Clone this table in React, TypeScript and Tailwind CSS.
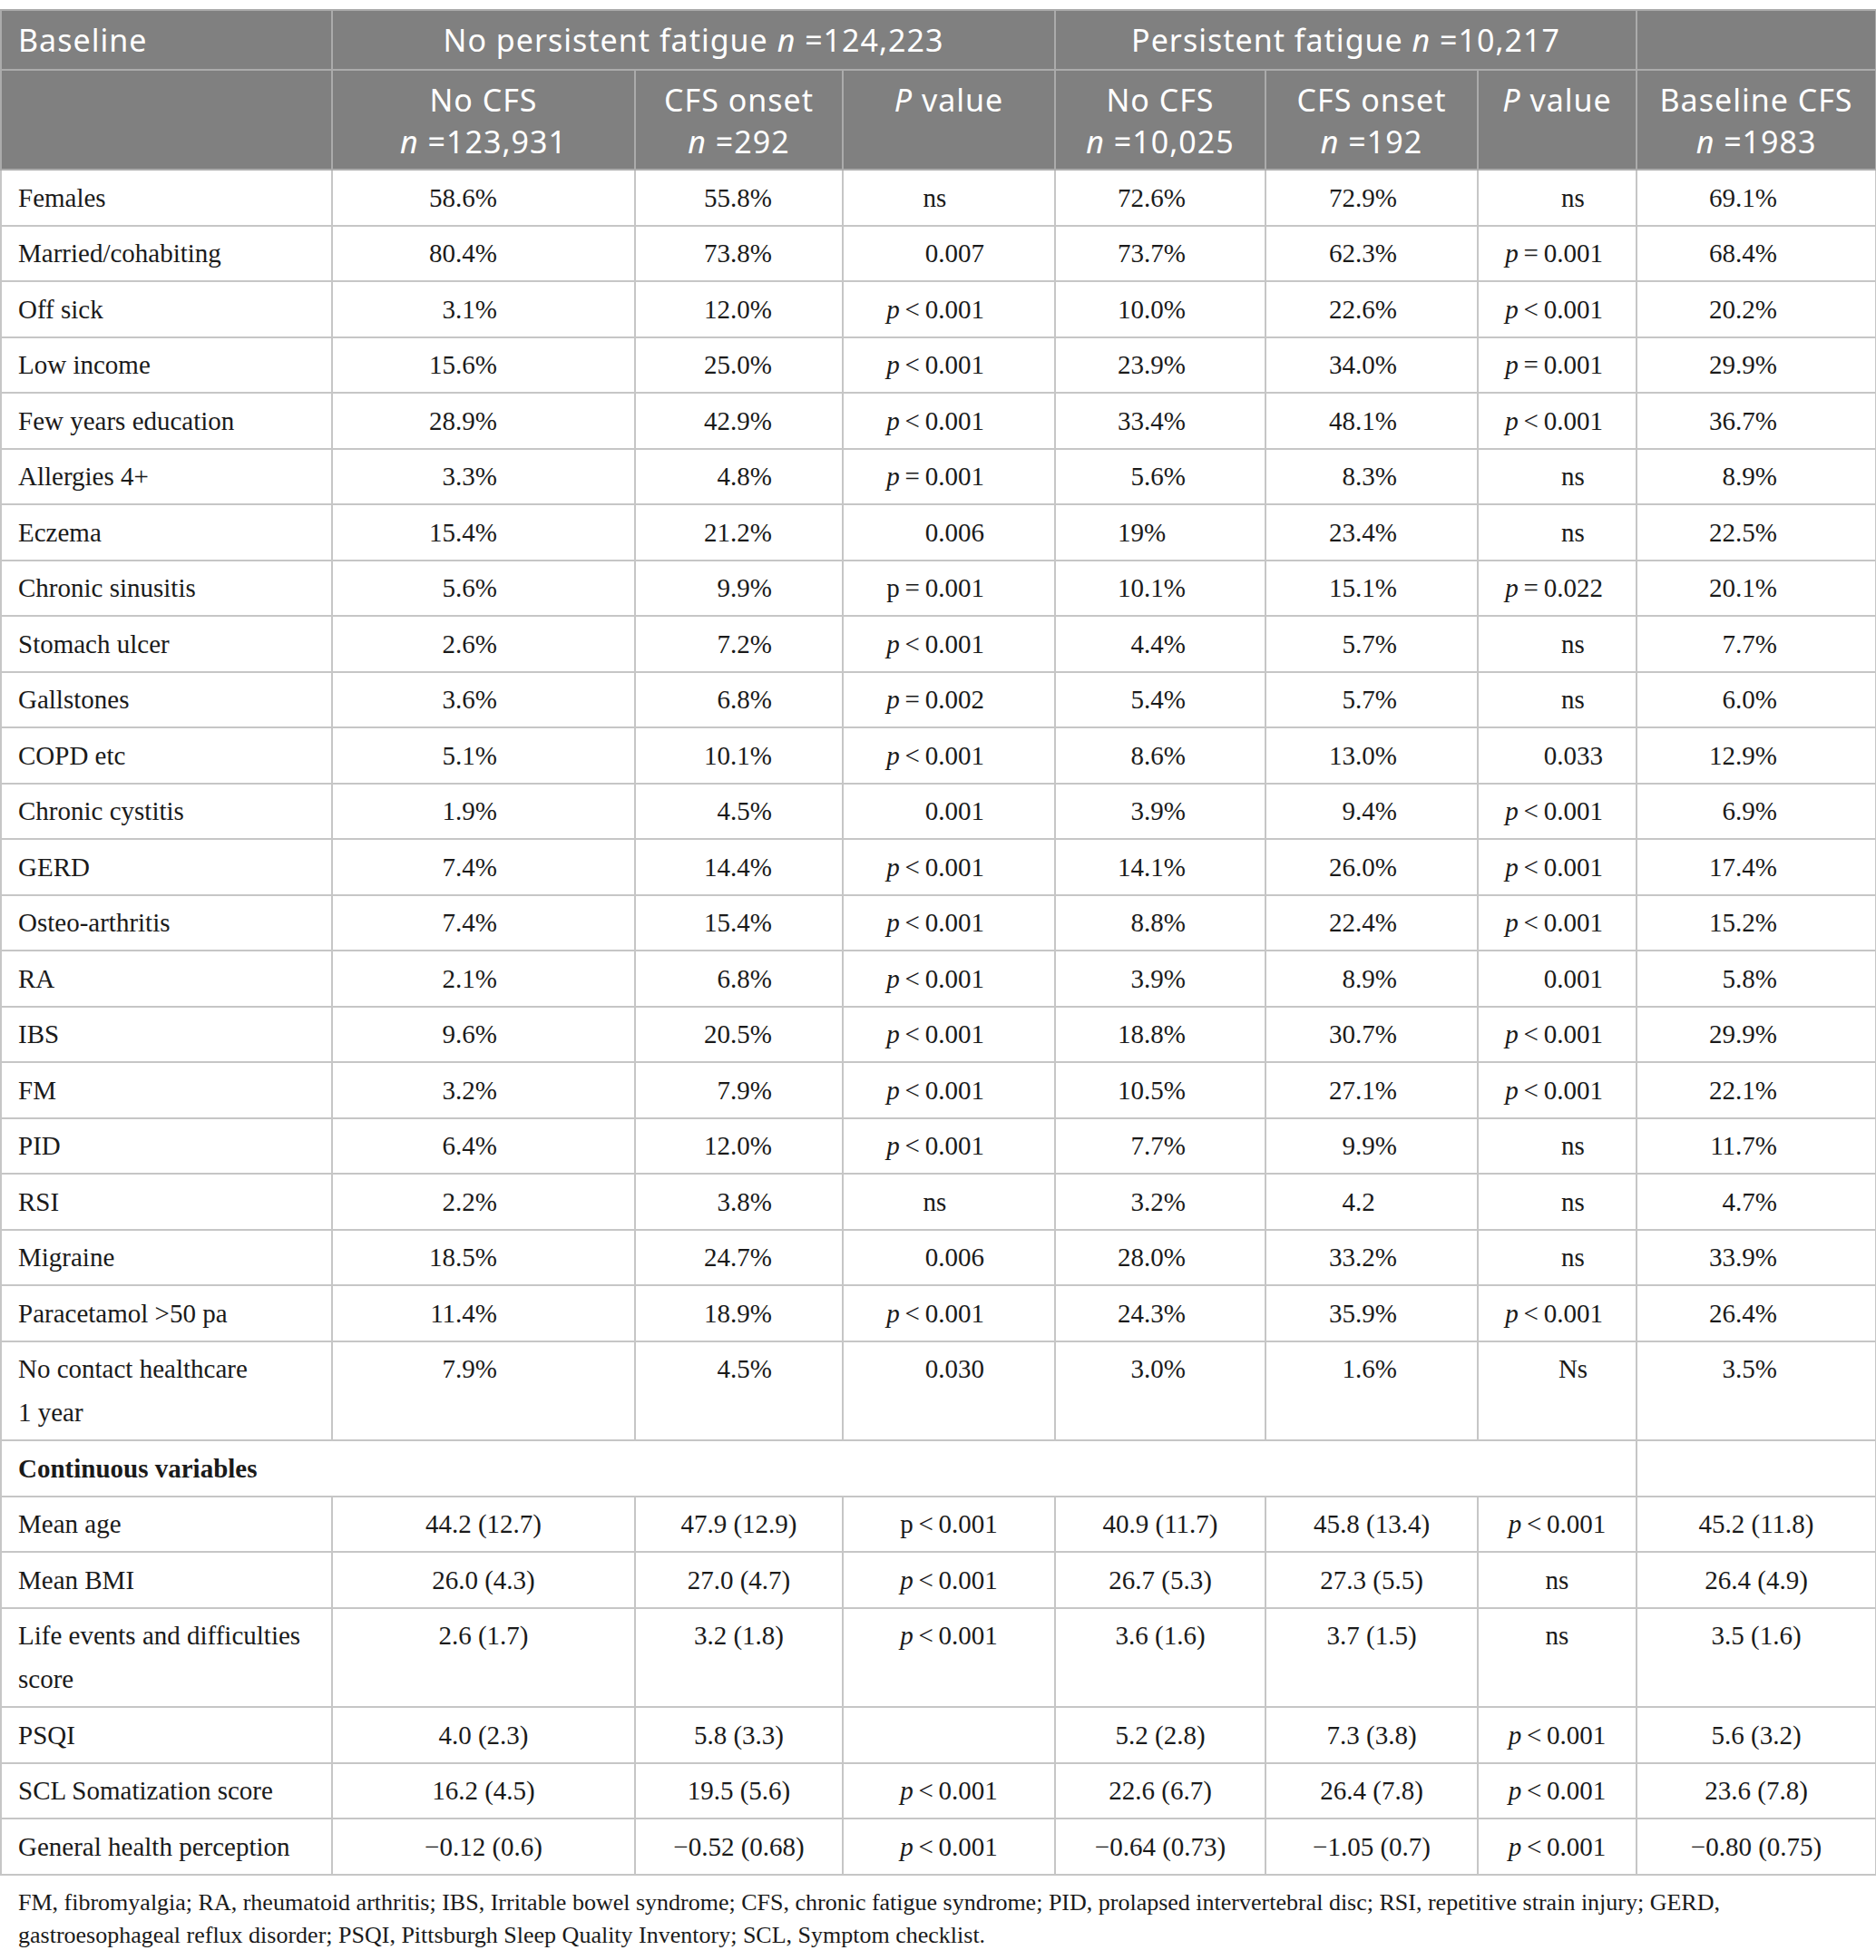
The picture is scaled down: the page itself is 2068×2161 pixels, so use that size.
import type { ReactNode } from "react";

type Val = ReactNode;

const serif = "font-['Liberation_Serif',serif]";
const sans = "font-['Noto_Sans',sans-serif]";

// italic p value, e.g. ip("<", "0.001")
function ip(op: string, num: string): ReactNode {
  return (
    <>
      <i>p</i>
      {"\u2009" + op + "\u2009" + num}
    </>
  );
}

// upright p value
function up(op: string, num: string): string {
  return "p\u2009" + op + "\u2009" + num;
}

const hidden = (s: string) => <span className="invisible">{s}</span>;

interface PctRow {
  label: ReactNode;
  cells: Val[];
}

const pctRows: PctRow[] = [
  { label: "Females", cells: ["58.6%", "55.8%", "ns", "72.6%", "72.9%", "ns", "69.1%"] },
  { label: "Married/cohabiting", cells: ["80.4%", "73.8%", "0.007", "73.7%", "62.3%", ip("=", "0.001"), "68.4%"] },
  { label: "Off sick", cells: ["3.1%", "12.0%", ip("<", "0.001"), "10.0%", "22.6%", ip("<", "0.001"), "20.2%"] },
  { label: "Low income", cells: ["15.6%", "25.0%", ip("<", "0.001"), "23.9%", "34.0%", ip("=", "0.001"), "29.9%"] },
  { label: "Few years education", cells: ["28.9%", "42.9%", ip("<", "0.001"), "33.4%", "48.1%", ip("<", "0.001"), "36.7%"] },
  { label: "Allergies 4+", cells: ["3.3%", "4.8%", ip("=", "0.001"), "5.6%", "8.3%", "ns", "8.9%"] },
  { label: "Eczema", cells: ["15.4%", "21.2%", "0.006", <>19%{hidden(".0")}</>, "23.4%", "ns", "22.5%"] },
  { label: "Chronic sinusitis", cells: ["5.6%", "9.9%", up("=", "0.001"), "10.1%", "15.1%", ip("=", "0.022"), "20.1%"] },
  { label: "Stomach ulcer", cells: ["2.6%", "7.2%", ip("<", "0.001"), "4.4%", "5.7%", "ns", "7.7%"] },
  { label: "Gallstones", cells: ["3.6%", "6.8%", ip("=", "0.002"), "5.4%", "5.7%", "ns", "6.0%"] },
  { label: "COPD etc", cells: ["5.1%", "10.1%", ip("<", "0.001"), "8.6%", "13.0%", "0.033", "12.9%"] },
  { label: "Chronic cystitis", cells: ["1.9%", "4.5%", "0.001", "3.9%", "9.4%", ip("<", "0.001"), "6.9%"] },
  { label: "GERD", cells: ["7.4%", "14.4%", ip("<", "0.001"), "14.1%", "26.0%", ip("<", "0.001"), "17.4%"] },
  { label: "Osteo-arthritis", cells: ["7.4%", "15.4%", ip("<", "0.001"), "8.8%", "22.4%", ip("<", "0.001"), "15.2%"] },
  { label: "RA", cells: ["2.1%", "6.8%", ip("<", "0.001"), "3.9%", "8.9%", "0.001", "5.8%"] },
  { label: "IBS", cells: ["9.6%", "20.5%", ip("<", "0.001"), "18.8%", "30.7%", ip("<", "0.001"), "29.9%"] },
  { label: "FM", cells: ["3.2%", "7.9%", ip("<", "0.001"), "10.5%", "27.1%", ip("<", "0.001"), "22.1%"] },
  { label: "PID", cells: ["6.4%", "12.0%", ip("<", "0.001"), "7.7%", "9.9%", "ns", "11.7%"] },
  { label: "RSI", cells: ["2.2%", "3.8%", "ns", "3.2%", <>4.2{hidden("%")}</>, "ns", "4.7%"] },
  { label: "Migraine", cells: ["18.5%", "24.7%", "0.006", "28.0%", "33.2%", "ns", "33.9%"] },
  { label: "Paracetamol >50 pa", cells: ["11.4%", "18.9%", ip("<", "0.001"), "24.3%", "35.9%", ip("<", "0.001"), "26.4%"] },
  {
    label: (
      <>
        No contact healthcare
        <br />1 year
      </>
    ),
    cells: ["7.9%", "4.5%", "0.030", "3.0%", "1.6%", "Ns", "3.5%"],
  },
];

const contRows: PctRow[] = [
  { label: "Mean age", cells: ["44.2 (12.7)", "47.9 (12.9)", up("<", "0.001"), "40.9 (11.7)", "45.8 (13.4)", ip("<", "0.001"), "45.2 (11.8)"] },
  { label: "Mean BMI", cells: ["26.0 (4.3)", "27.0 (4.7)", ip("<", "0.001"), "26.7 (5.3)", "27.3 (5.5)", "ns", "26.4 (4.9)"] },
  {
    label: (
      <>
        Life events and difficulties
        <br />
        score
      </>
    ),
    cells: ["2.6 (1.7)", "3.2 (1.8)", ip("<", "0.001"), "3.6 (1.6)", "3.7 (1.5)", "ns", "3.5 (1.6)"],
  },
  { label: "PSQI", cells: ["4.0 (2.3)", "5.8 (3.3)", "", "5.2 (2.8)", "7.3 (3.8)", ip("<", "0.001"), "5.6 (3.2)"] },
  { label: "SCL Somatization score", cells: ["16.2 (4.5)", "19.5 (5.6)", ip("<", "0.001"), "22.6 (6.7)", "26.4 (7.8)", ip("<", "0.001"), "23.6 (7.8)"] },
  {
    label: "General health perception",
    cells: ["\u22120.12 (0.6)", "\u22120.52 (0.68)", ip("<", "0.001"), "\u22120.64 (0.73)", "\u22121.05 (0.7)", ip("<", "0.001"), "\u22120.80 (0.75)"],
  },
];

// decimal-ish alignment for the percentage block: right edge per column
const pctAlign = [
  "text-right pr-[151px]",
  "text-right pr-[77px]",
  "text-right pr-[77px]",
  "text-right pr-[87px]",
  "text-right pr-[88px]",
  "text-right pr-[36px]",
  "text-right pr-[108px]",
];
const nsAlign = ["", "", "text-center pr-[31px]", "", "", "text-center pl-[35px]", ""];

const td = "border-2 border-[#c6c6c6] align-top py-[5.75px] leading-[48px]";
const th = "border-2 border-[#ababab] align-top font-normal";

function isNs(v: Val) {
  return v === "ns" || v === "Ns";
}

export default function App() {
  return (
    <div className="min-h-screen bg-white pt-[10px] text-[#1a1a1a]">
      <table className="w-[2067px] table-fixed border-collapse">
        <colgroup>
          <col className="w-[365px]" />
          <col className="w-[334px]" />
          <col className="w-[229px]" />
          <col className="w-[234px]" />
          <col className="w-[232px]" />
          <col className="w-[234px]" />
          <col className="w-[175px]" />
          <col className="w-[264px]" />
        </colgroup>
        <thead className={`${sans} bg-[#808080] text-[34px] tracking-[1px] text-white`}>
          <tr>
            <th className={`${th} py-[9px] pl-[18px] text-left leading-[46px]`}>Baseline</th>
            <th colSpan={3} className={`${th} py-[9px] text-center leading-[46px]`}>
              No persistent fatigue <i>n</i> =124,223
            </th>
            <th colSpan={3} className={`${th} py-[9px] text-center leading-[46px]`}>
              Persistent fatigue <i>n</i> =10,217
            </th>
            <th className={th} />
          </tr>
          <tr>
            <th className={th} />
            {[
              ["No CFS", "123,931"],
              ["CFS onset", "292"],
              ["P", ""],
              ["No CFS", "10,025"],
              ["CFS onset", "192"],
              ["P", ""],
              ["Baseline CFS", "1983"],
            ].map(([a, n], i) => (
              <th key={i} className={`${th} pt-[9px] pb-[7px] text-center leading-[46px]`}>
                {a === "P" ? (
                  <>
                    <i>P</i> value
                  </>
                ) : (
                  <>
                    {a}
                    <br />
                    <i>n</i> ={n}
                  </>
                )}
              </th>
            ))}
          </tr>
        </thead>
        <tbody className={`${serif} text-[29px]`}>
          {pctRows.map((r, ri) => (
            <tr key={ri}>
              <td className={`${td} pl-[18px] text-left`}>{r.label}</td>
              {r.cells.map((c, ci) => (
                <td key={ci} className={`${td} ${isNs(c) ? nsAlign[ci] : pctAlign[ci]}`}>
                  {c}
                </td>
              ))}
            </tr>
          ))}
          <tr>
            <td colSpan={7} className={`${td} pl-[18px] text-left font-bold`}>
              Continuous variables
            </td>
            <td className={td} />
          </tr>
          {contRows.map((r, ri) => (
            <tr key={ri}>
              <td className={`${td} pl-[18px] text-left`}>{r.label}</td>
              {r.cells.map((c, ci) => (
                <td key={ci} className={`${td} text-center`}>
                  {c}
                </td>
              ))}
            </tr>
          ))}
        </tbody>
      </table>
      <div className={`${serif} mt-[12px] pl-[20px] text-[26px] leading-[36px]`}>
        <div>
          FM, fibromyalgia; RA, rheumatoid arthritis; IBS, Irritable bowel syndrome; CFS, chronic fatigue syndrome;
          PID, prolapsed intervertebral disc; RSI, repetitive strain injury; GERD,
        </div>
        <div>gastroesophageal reflux disorder; PSQI, Pittsburgh Sleep Quality Inventory; SCL, Symptom checklist.</div>
      </div>
    </div>
  );
}
